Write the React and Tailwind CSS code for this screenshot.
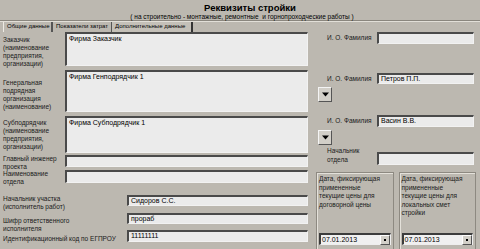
import React from "react";

const inp =
  "bg-[#ebebeb] border-t-2 border-l-2 border-t-[#4a4a4a] border-l-[#4a4a4a] border-b border-r border-b-[#f2f2f2] border-r-[#f2f2f2] text-[7px] leading-[8px] text-black px-[2px] box-border whitespace-nowrap";

function Arrow({ cls }) {
  return (
    <div
      className={
        "w-[14px] h-[15px] bg-[#d2cfc8] border border-t-[#f4f4f4] border-l-[#f4f4f4] border-b-[#555] border-r-[#555] flex items-center justify-center " +
        (cls || "")
      }
    >
      <svg width="7" height="5" viewBox="0 0 7 5">
        <path d="M0 0.5 L7 0.5 L3.5 4.5 Z" fill="#000" />
      </svg>
    </div>
  );
}

function DateBox({ lines }) {
  return (
    <div className="flex-1 h-[78px] border border-[#8d8981] shadow-[inset_1px_1px_0_#e4e1da] flex flex-col justify-between pb-[4px] px-[2px] pt-[2px]">
      <div className="text-[6.5px] leading-[8.5px] text-[#1a1a1a] whitespace-nowrap">
        {lines.map((l, i) => (
          <div key={i}>{l}</div>
        ))}
      </div>
      <div className="flex h-[12px] bg-[#f0f0f0] border-t-2 border-l-2 border-[#3c3c3c] border-b border-r border-b-[#eee] border-r-[#eee] items-center">
        <div className="flex-1 text-[7px] leading-[8px] pl-[1px]">07.01.2013</div>
        <div className="w-[10px] h-[10px] bg-[#d2cfc8] border border-t-[#fff] border-l-[#fff] border-b-[#555] border-r-[#555] flex items-center justify-center">
          <div className="w-[2px] h-[2px] bg-black"></div>
        </div>
      </div>
    </div>
  );
}

export default function App() {
  return (
    <div
      className="w-[480px] h-[249px] bg-[#bcb8b0] overflow-hidden text-black"
      style={{ fontFamily: '"Liberation Sans", Arial, sans-serif' }}
    >
      {/* header */}
      <div className="h-[21px] border-b border-b-[#8a867e] flex flex-col items-center">
        <div className="text-[9.5px] leading-[11px] font-bold mt-[2px] ml-[20px]">
          Реквизиты стройки
        </div>
        <div className="text-[6.5px] leading-[8px] ml-[4px] whitespace-nowrap">
          ( на строительно - монтажные, ремонтные&nbsp; и горнопроходческие работы )
        </div>
      </div>
      {/* tabs */}
      <div className="h-[11px] flex pl-[3px] border-t border-t-[#e2dfd8] text-[6px] leading-[9px] whitespace-nowrap">
        <div className="w-[50px] border-l border-l-[#eeebe4] border-r-2 border-r-[#555] pl-[3px] overflow-hidden">
          Общие данные
        </div>
        <div className="w-[59px] border-r border-r-[#555] pl-[3px] overflow-hidden">
          Показатели затрат
        </div>
        <div className="w-[81px] border-r-2 border-r-[#333] pl-[3px] bg-[#c4c0b8] overflow-hidden">
          Дополнительные данные
        </div>
      </div>
      {/* body */}
      <div className="flex">
        {/* left column */}
        <div className="w-[310px] pl-[3px] flex flex-col text-[6.5px] leading-[8px]">
          <div className="flex h-[38px]">
            <div className="w-[62px] pt-[4px] text-[#1a1a1a]">
              Заказчик
              <br />
              (наименование
              <br />
              предприятия,
              <br />
              организации)
            </div>
            <div className={inp + " w-[243px] h-[34px] pt-[1px]"}>Фирма Заказчик</div>
          </div>
          <div className="flex h-[46px]">
            <div className="w-[62px] pt-[9px] text-[#1a1a1a]">
              Генеральная
              <br />
              подрядная
              <br />
              организация
              <br />
              (наименование)
            </div>
            <div className={inp + " w-[243px] h-[42px] pt-[1px]"}>Фирма Генподрядчик 1</div>
          </div>
          <div className="flex h-[39px]">
            <div className="w-[62px] pt-[3px] text-[#1a1a1a]">
              Субподрядчик
              <br />
              (наименование
              <br />
              предприятия,
              <br />
              организации)
            </div>
            <div className={inp + " w-[243px] h-[37px] pt-[1px]"}>Фирма Субподрядчик 1</div>
          </div>
          <div className="flex h-[15px]">
            <div className="w-[62px] text-[#1a1a1a]">
              Главный инженер
              <br />
              проекта
            </div>
            <div className={inp + " w-[243px] h-[12px]"}></div>
          </div>
          <div className="flex h-[25px]">
            <div className="w-[62px] text-[#1a1a1a]">
              Наименование
              <br />
              отдела
            </div>
            <div className={inp + " w-[243px] h-[13px]"}></div>
          </div>
          <div className="flex h-[18px]">
            <div className="w-[124px] text-[#1a1a1a]">
              Начальник участка
              <br />
              (исполнитель работ)
            </div>
            <div className={inp + " w-[181px] h-[11px]"}>Сидоров С.С.</div>
          </div>
          <div className="flex h-[17px]">
            <div className="w-[124px] pt-[4px] text-[#1a1a1a]">
              Шифр ответственного
              <br />
              исполнителя
            </div>
            <div className={inp + " w-[181px] h-[11px]"}>прораб</div>
          </div>
          <div className="flex h-[14px]">
            <div className="w-[124px] pt-[5px] text-[#1a1a1a] whitespace-nowrap">
              Идентификационный код по ЕГПРОУ
            </div>
            <div className={inp + " w-[181px] h-[12px]"}>11111111</div>
          </div>
        </div>
        {/* right column */}
        <div className="w-[160px] ml-[6px] flex flex-col text-[6.5px] leading-[8px]">
          <div className="flex items-center h-[12px]">
            <div className="w-[61px] pl-[11px] text-[#1a1a1a] whitespace-nowrap">И. О. Фамилия</div>
            <div className={inp + " w-[97px] h-[12px]"}></div>
          </div>
          <div className="flex items-center h-[11px] mt-[29px]">
            <div className="w-[61px] pl-[11px] text-[#1a1a1a] whitespace-nowrap">И. О. Фамилия</div>
            <div className={inp + " w-[97px] h-[11px]"}>Петров П.П.</div>
          </div>
          <Arrow cls="mt-[3px] ml-[2px]" />
          <div className="flex items-center h-[12px] mt-[13px]">
            <div className="w-[61px] pl-[11px] text-[#1a1a1a] whitespace-nowrap">И. О. Фамилия</div>
            <div className={inp + " w-[97px] h-[12px]"}>Васин В.В.</div>
          </div>
          <Arrow cls="mt-[3px] ml-[2px]" />
          <div className="flex items-start h-[19px] mt-[2px]">
            <div className="w-[61px] pl-[11px] text-[#1a1a1a] leading-[8.5px]">
              Начальник
              <br />
              отдела
            </div>
            <div className={inp + " w-[97px] h-[13px] mt-[5px]"}></div>
          </div>
          <div className="flex gap-[5px] mt-[6px]">
            <DateBox
              lines={[
                "Дата, фиксирующая",
                "примененные",
                "текущие цены для",
                "договорной цены",
              ]}
            />
            <DateBox
              lines={[
                "Дата, фиксирующая",
                "примененные",
                "текущие цены для",
                "локальных смет",
                "стройки",
              ]}
            />
          </div>
        </div>
      </div>
    </div>
  );
}
